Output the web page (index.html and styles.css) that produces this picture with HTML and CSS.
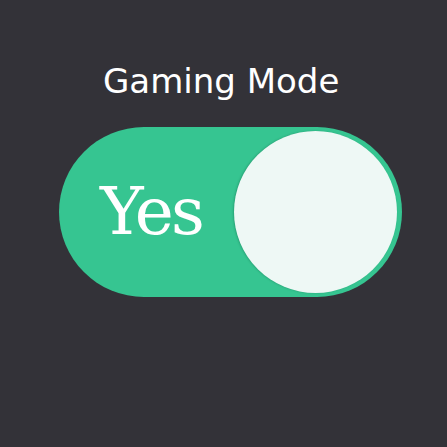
FILE: index.html
```html
<!DOCTYPE html>
<html>
<head>
<meta charset="utf-8">
<link rel="stylesheet" href="styles.css">
</head>
<body>
<main class="page">
  <h1 class="title">Gaming Mode</h1>
  <div class="switch">
    <span class="label">Yes</span>
    <span class="knob"></span>
  </div>
</main>
</body>
</html>
```
FILE: styles.css
```css
html, body {
  margin: 0;
  padding: 0;
  background: #333238;
  width: 447px;
  height: 447px;
  overflow: hidden;
}
.page {
  display: flex;
  flex-direction: column;
  align-items: flex-start;
  padding-top: 61px;
}
.title {
  margin: 0 0 0 103px;
  font-family: "DejaVu Sans", sans-serif;
  font-weight: normal;
  font-size: 34px;
  line-height: 40px;
  color: #ffffff;
}
.switch {
  margin: 26px 0 0 59px;
  width: 343px;
  height: 170px;
  border-radius: 85px;
  background: #36c591;
  display: flex;
  align-items: center;
  justify-content: space-between;
  box-sizing: border-box;
  padding: 0 5px 0 41px;
}
.label {
  font-family: "DejaVu Serif", serif;
  font-size: 66px;
  letter-spacing: -3px;
  line-height: 1;
  color: #ffffff;
  margin-top: 0;
}
.knob {
  width: 163px;
  height: 162px;
  border-radius: 50%;
  background: #eef8f5;
  box-shadow: -1px 0 2px rgba(0, 60, 40, 0.25);
}
```
